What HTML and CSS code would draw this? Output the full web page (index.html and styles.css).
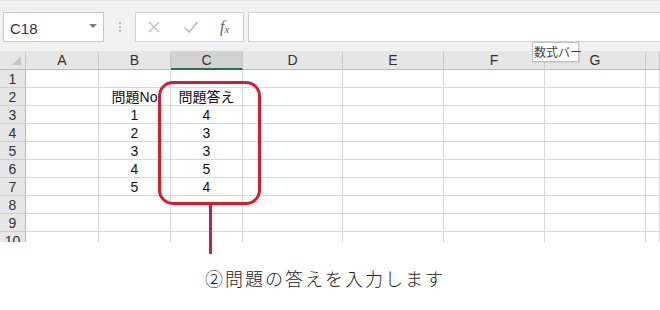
FILE: index.html
```html
<!DOCTYPE html>
<html lang="ja">
<head>
<meta charset="utf-8">
<link rel="stylesheet" href="styles.css">
</head>
<body>
<div class="page">
  <div class="toolbar">
    <div class="namebox">
      <span class="ref">C18</span>
      <span class="caret"></span>
    </div>
    <div class="grip"><i></i><i></i><i></i></div>
    <div class="buttons">
      <svg class="btn" width="14" height="14" viewBox="0 0 14 14"><path d="M2 2 L12 12 M12 2 L2 12" stroke="#bdbdbd" stroke-width="1.4" fill="none"/></svg>
      <svg class="btn" width="16" height="14" viewBox="0 0 16 14"><path d="M1.5 7.5 L6 12 L14.5 2" stroke="#bdbdbd" stroke-width="1.6" fill="none"/></svg>
      <span class="fx">f<sub>x</sub></span>
    </div>
    <div class="formula"></div>
  </div>

  <div class="sheet">
    <div class="hd corner"><span class="tri"></span></div>
    <div class="hd">A</div><div class="hd">B</div><div class="hd sel">C</div><div class="hd">D</div><div class="hd">E</div><div class="hd">F</div><div class="hd">G</div><div class="hd"></div>

    <div class="rh">1</div><div class="c"></div><div class="c"></div><div class="c"></div><div class="c"></div><div class="c"></div><div class="c"></div><div class="c"></div><div class="c"></div>
    <div class="rh">2</div><div class="c"></div><div class="c t">問題No</div><div class="c t">問題答え</div><div class="c"></div><div class="c"></div><div class="c"></div><div class="c"></div><div class="c"></div>
    <div class="rh">3</div><div class="c"></div><div class="c t">1</div><div class="c t">4</div><div class="c"></div><div class="c"></div><div class="c"></div><div class="c"></div><div class="c"></div>
    <div class="rh">4</div><div class="c"></div><div class="c t">2</div><div class="c t">3</div><div class="c"></div><div class="c"></div><div class="c"></div><div class="c"></div><div class="c"></div>
    <div class="rh">5</div><div class="c"></div><div class="c t">3</div><div class="c t">3</div><div class="c"></div><div class="c"></div><div class="c"></div><div class="c"></div><div class="c"></div>
    <div class="rh">6</div><div class="c"></div><div class="c t">4</div><div class="c t">5</div><div class="c"></div><div class="c"></div><div class="c"></div><div class="c"></div><div class="c"></div>
    <div class="rh">7</div><div class="c"></div><div class="c t">5</div><div class="c t">4</div><div class="c"></div><div class="c"></div><div class="c"></div><div class="c"></div><div class="c"></div>
    <div class="rh">8</div><div class="c"></div><div class="c"></div><div class="c"></div><div class="c"></div><div class="c"></div><div class="c"></div><div class="c"></div><div class="c"></div>
    <div class="rh">9</div><div class="c"></div><div class="c"></div><div class="c"></div><div class="c"></div><div class="c"></div><div class="c"></div><div class="c"></div><div class="c"></div>
    <div class="rh">10</div><div class="c"></div><div class="c"></div><div class="c"></div><div class="c"></div><div class="c"></div><div class="c"></div><div class="c"></div><div class="c"></div>
  </div>

  <div class="caption">②問題の答えを入力します</div>

  <div class="highlight"></div>
  <div class="pointer"></div>
  <div class="tooltip">数式バー</div>
</div>
</body>
</html>
```

FILE: styles.css
```css
* { box-sizing: border-box; }
html, body { margin: 0; padding: 0; background: #ffffff; }
.page {
  position: relative;
  width: 660px;
  height: 310px;
  overflow: hidden;
  font-family: "Noto Sans CJK JP", "Liberation Sans", sans-serif;
  color: #222;
}
.toolbar {
  display: flex;
  align-items: stretch;
  height: 51px;
  padding: 11px 0 9px 3px;
  background: #f1f1f1;
  border-top: 1px solid #e2e2e2;
}
.namebox {
  width: 101px;
  background: #fff;
  border: 1px solid #c8c8c8;
  display: flex;
  align-items: center;
  justify-content: space-between;
  padding: 0 6px 0 6px;
}
.ref {
  font-family: "Liberation Sans", sans-serif;
  font-size: 15px;
  color: #333;
  padding-top: 3px;
}
.caret {
  width: 0; height: 0;
  border-left: 4px solid transparent;
  border-right: 4px solid transparent;
  border-top: 4px solid #808080;
  margin-top: -2px;
}
.grip {
  width: 31px;
  display: flex;
  flex-direction: column;
  align-items: center;
  justify-content: center;
  gap: 2px;
}
.grip i { width: 2px; height: 2px; background: #b8b8b8; display: block; }
.buttons {
  width: 109px;
  background: #fff;
  border: 1px solid #d2d2d2;
  display: flex;
  align-items: center;
  padding-left: 11px;
  gap: 22px;
}
.btn { display: block; }
.fx {
  font-family: "Liberation Serif", serif;
  font-style: italic;
  font-size: 16px;
  color: #666;
  margin-left: -1px;
}
.fx sub { font-size: 11px; vertical-align: -1px; }
.formula {
  flex: 1;
  margin-left: 4px;
  background: #fff;
  border: 1px solid #d2d2d2;
  border-right: none;
}
.sheet {
  display: grid;
  grid-template-columns: 26px 73px 72px 72px 100px 101px 101px 101px 14px;
  grid-template-rows: 19px;
  grid-auto-rows: 18px;
  height: 191px;
  overflow: hidden;
  font-family: "Liberation Sans", "Noto Sans CJK JP", sans-serif;
}
.hd {
  background: #e6e6e6;
  border-right: 1px solid #c9c9c9;
  border-bottom: 1px solid #b9b9b9;
  font-size: 14px;
  color: #333;
  text-align: center;
  line-height: 19px;
}
.hd.sel {
  background: #d2d2d2;
  border-bottom: 2px solid #217346;
  line-height: 18px;
}
.corner { position: relative; background: #e6e6e6; }
.tri {
  position: absolute;
  right: 4px;
  bottom: 4px;
  width: 0; height: 0;
  border-left: 9px solid transparent;
  border-bottom: 9px solid #c4c4c4;
}
.rh {
  background: #e6e6e6;
  border-right: 1px solid #b9b9b9;
  border-bottom: 1px solid #cfcfcf;
  font-size: 14px;
  color: #333;
  text-align: center;
  line-height: 18px;
}
.c {
  border-right: 1px solid #d8d8d8;
  border-bottom: 1px solid #d8d8d8;
  font-size: 14px;
  color: #111;
  line-height: 18px;
  white-space: nowrap;
  overflow: hidden;
}
.c.t {
  text-align: center;
  font-family: "Liberation Sans", "Noto Sans CJK JP", sans-serif;
  font-size: 14px;
  line-height: 18px;
}
.caption {
  margin-top: 25px;
  padding-left: 205px;
  font-size: 18px;
  letter-spacing: 2px;
  line-height: 22px;
  color: #222;
  font-weight: 300;
}
.highlight {
  position: absolute;
  left: 158px;
  top: 81px;
  width: 103px;
  height: 124px;
  border: 3px solid #d21f2f;
  border-radius: 15px;
}
.pointer {
  position: absolute;
  left: 209px;
  top: 204px;
  width: 3px;
  height: 50px;
  background: #d21f2f;
}
.tooltip {
  position: absolute;
  left: 532px;
  top: 42px;
  width: 47px;
  height: 20px;
  background: #fff;
  border: 1px solid #c4c4c4;
  font-size: 12px;
  line-height: 18px;
  padding-left: 1px;
  color: #444;
  box-shadow: 1px 1px 1px rgba(0,0,0,0.08);
  white-space: nowrap;
}
```
